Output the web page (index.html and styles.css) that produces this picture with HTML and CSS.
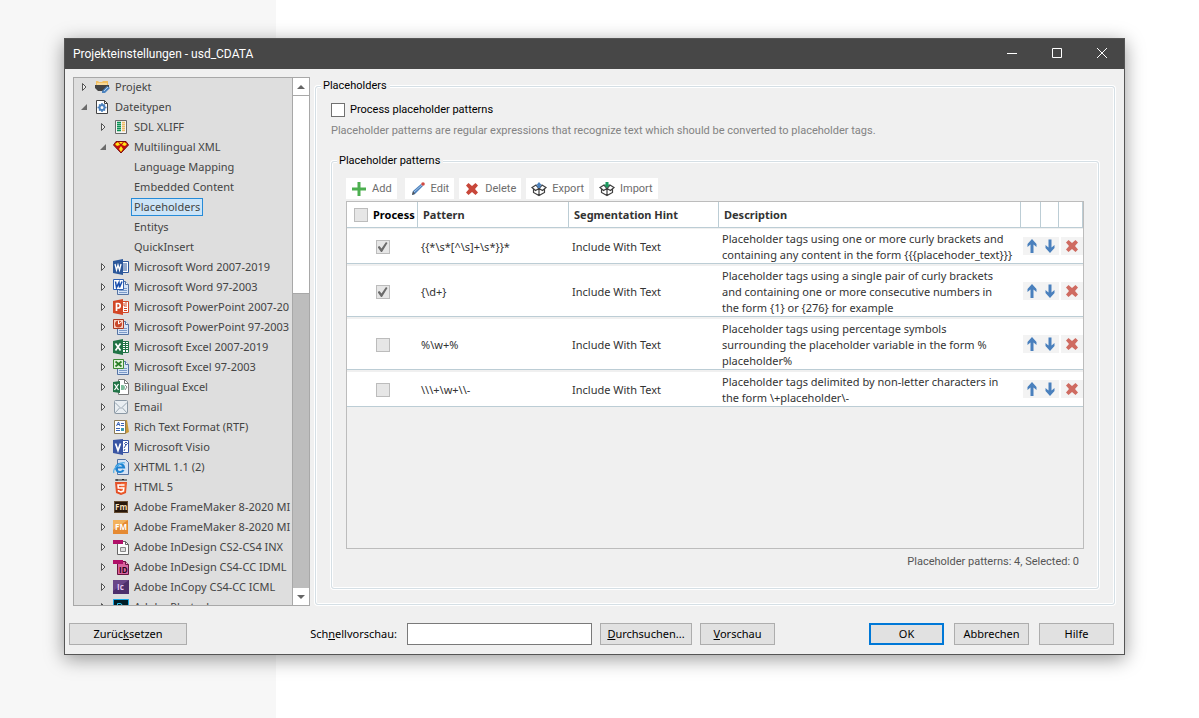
FILE: index.html
```html
<!DOCTYPE html>
<html lang="de">
  <head>
    <meta charset="UTF-8" />
    <meta name="viewport" content="width=device-width, initial-scale=1.0" />
    <title>Projekteinstellungen - usd_CDATA</title>
    <link rel="stylesheet" href="styles.css">
  </head>

  <body>
    <!-- shared icons -->
    <svg class="defs" aria-hidden="true">
      <symbol id="closed" viewBox="0 0 8 10"><path d="M2.500 1.500v7L6 5z" fill="#eee" stroke="#555"/></symbol>
      <symbol id="open" viewBox="0 0 8 10"><path d="M7 2v6H1z" fill="#6b6b6b"/></symbol>
      <symbol id="up" viewBox="0 0 16 16"><path d="M8 1l4.500 5v3L9.500 6.500V15h-3V6.500L3.500 9V6z" fill="#4a80bd"/></symbol>
      <symbol id="down" viewBox="0 0 16 16"><path d="M8 15l4.500-5V7L9.500 9.500V1.500h-3v8L3.500 7v3z" fill="#4a80bd"/></symbol>
      <symbol id="cross" viewBox="0 0 16 16"><path d="M4.500 2L8 5l3.500-3L14 4.500 11 8l3 3.500-2.500 2.500L8 11l-3.500 3L2 11.500 5 8 2 4.500z" fill="currentColor"/></symbol>
      <symbol id="box" viewBox="0 0 16 16">
        <path d="M2 6l6-2 6 2v6l-6 3-6-3z" fill="#fff"/>
        <path d="M2.500 8v3.500l5.500 3 5.500-3V8M8 8v6.500M1 6.500L5 4l3 3.500L4.500 9.500zM15 6.500L11 4 8 7.500l3.500 2z" fill="none" stroke="#3f3f3f" stroke-width="1.200"/>
      </symbol>
      <symbol id="page" viewBox="0 0 16 16">
        <path d="M4.500 2.500h8l3 3v10h-11z" fill="#d6e3f5" stroke="#5473a3"/>
        <path d="M12.500 2.500v3h3" fill="#fff" stroke="#5473a3"/>
        <path d="M6 11.500h8M6 13.500h8M11 9.500h3" stroke="#7b9bca"/>
      </symbol>
    </svg>

    <div class="window">
      <header class="titlebar">
        <h1>Projekteinstellungen - usd_CDATA</h1>
        <div class="window-buttons">
          <button aria-label="Minimieren"><svg width="10" height="10"><path d="M0 5.500h10" stroke="#fff"/></svg></button>
          <button aria-label="Maximieren"><svg width="10" height="10"><path d="M.5.5h9v9h-9z" fill="none" stroke="#fff"/></svg></button>
          <button aria-label="Schließen"><svg width="10" height="10"><path d="M0 0l10 10M10 0L0 10" stroke="#fff"/></svg></button>
        </div>
      </header>

      <main class="content">
        <nav class="tree">
          <ul class="tree-list">
            <li><svg class="arrow"><use href="#closed"/></svg>
              <svg class="icon" viewBox="0 0 16 16"><path d="M2 6V2h2l1 1h3l1-1h5v5z" fill="#f2c063"/><path d="M3 5h10" stroke="#fff3cf"/><path d="M1 6h14v3l-3 3H4L1 9z" fill="#444"/><path d="M8 12l5-5 3 2-5 5H8z" fill="#4d84bf"/><path d="M10 12l4-4" stroke="#b9d2ec"/></svg>
              <span>Projekt</span></li>
            <li><svg class="arrow"><use href="#open"/></svg>
              <svg class="icon" viewBox="0 0 16 16"><path d="M2.500 1.500h8l3 3v10h-11z" fill="#fff" stroke="#444"/><path d="M10.500 1.500v3h3" fill="none" stroke="#444"/><circle cx="8" cy="8.500" r="2.500" fill="none" stroke="#4a80bd" stroke-width="2"/><path d="M8 4v2M8 11v2M3.500 8.500h2M10.500 8.500h2M5 5.500l1 1M10 10.500l1 1M11 5.500l-1 1M6 10.500l-1 1" stroke="#4a80bd" stroke-width="1.500"/></svg>
              <span>Dateitypen</span></li>
            <li class="sub"><svg class="arrow"><use href="#closed"/></svg>
              <svg class="icon" viewBox="0 0 16 16"><path d="M2.500 1.500h11v13h-11z" fill="#f4f4f4" stroke="#6b6b6b"/><path d="M4 3.500h4M4 5.500h4M4 7.500h4M4 9.500h4M4 11.500h4" stroke="#0b9355" stroke-width="1.500"/><path d="M9 3.500h3M9 5.500h3M9 7.500h3M9 9.500h3M9 11.500h3" stroke="#eebc67" stroke-width="1.500"/></svg>
              <span>SDL XLIFF</span></li>
            <li class="sub"><svg class="arrow"><use href="#open"/></svg>
              <svg class="icon" viewBox="0 0 16 16"><path d="M3 2.500h10l2.500 3.500L8 14 .5 6z" fill="#c40c0c" stroke="#7b1010"/><path d="M2 5l3-2 2 3-3 1zM14 5l-3-2-2 3 3 1zM6 3h4L8 5zM8 7l2 3-2 3-2-3z" fill="#ffe715"/></svg>
              <span>Multilingual XML</span></li>
            <li class="leaf"><span>Language Mapping</span></li>
            <li class="leaf"><span>Embedded Content</span></li>
            <li class="leaf selected"><span>Placeholders</span></li>
            <li class="leaf"><span>Entitys</span></li>
            <li class="leaf"><span>QuickInsert</span></li>
            <li class="sub"><svg class="arrow"><use href="#closed"/></svg>
              <svg class="icon" viewBox="0 0 16 16"><path d="M8.500 2.500h7v11h-7z" fill="#fff" stroke="#2b579a"/><path d="M9 5h5M9 7h5M9 9h5M9 11h5" stroke="#2b579a"/><path d="M0 2l10-2v16L0 14z" fill="#2b579a"/><path d="M2 5l1.500 6L5 6l1.500 5L8 5" fill="none" stroke="#fff" stroke-width="1.300"/></svg>
              <span>Microsoft Word 2007-2019</span></li>
            <li class="sub"><svg class="arrow"><use href="#closed"/></svg>
              <svg class="icon" viewBox="0 0 16 16"><use href="#page"/><path d="M.5.5h10v10H.5z" fill="#fff" stroke="#2e5fb0"/><path d="M2.500 2.500l1 6 2.500-5 .5 5 2.500-6" fill="none" stroke="#174dad" stroke-width="1.500"/></svg>
              <span>Microsoft Word 97-2003</span></li>
            <li class="sub"><svg class="arrow"><use href="#closed"/></svg>
              <svg class="icon" viewBox="0 0 16 16"><path d="M8.500 2.500h7v11h-7z" fill="#fff" stroke="#d24726"/><path d="M11 4v3h3M11 9.500h3M11 11.500h3M13 3v3" fill="none" stroke="#d24726"/><path d="M0 2l10-2v16L0 14z" fill="#d24726"/><path d="M3.500 12V4.500H5a2 2 0 0 1 0 4.500H3.500" fill="none" stroke="#fff" stroke-width="1.700"/></svg>
              <span>Microsoft PowerPoint 2007-20</span></li>
            <li class="sub"><svg class="arrow"><use href="#closed"/></svg>
              <svg class="icon" viewBox="0 0 16 16"><use href="#page"/><path d="M.5.5h10v9H.5z" fill="#f9d3c3" stroke="#a83c25"/><circle cx="5.500" cy="5" r="3.500" fill="#c9492a"/><path d="M5.500 5V1.500M5.500 5l3-2" stroke="#fff"/></svg>
              <span>Microsoft PowerPoint 97-2003</span></li>
            <li class="sub"><svg class="arrow"><use href="#closed"/></svg>
              <svg class="icon" viewBox="0 0 16 16"><path d="M8.500 2.500h7v11h-7z" fill="#fff" stroke="#217346"/><path d="M10 4.500h5M10 6.500h5M10 8.500h5M10 10.500h5M12.500 3v10" stroke="#217346"/><path d="M0 2l10-2v16L0 14z" fill="#217346"/><path d="M2.500 4.500l5 7M7.500 4.500l-5 7" stroke="#fff" stroke-width="1.700"/></svg>
              <span>Microsoft Excel 2007-2019</span></li>
            <li class="sub"><svg class="arrow"><use href="#closed"/></svg>
              <svg class="icon" viewBox="0 0 16 16"><use href="#page"/><path d="M.5.5h10v9H.5z" fill="#e3f2dc" stroke="#3e8a35"/><path d="M2.500 2.500l6 5M8.500 2.500l-6 5" stroke="#2a7d25" stroke-width="1.700"/></svg>
              <span>Microsoft Excel 97-2003</span></li>
            <li class="sub"><svg class="arrow"><use href="#closed"/></svg>
              <svg class="icon" viewBox="0 0 16 16"><path d="M5.500.5h6l4 4v11h-10z" fill="#fff" stroke="#7a7a7a"/><path d="M11.500.5v4h4" fill="none" stroke="#7a7a7a"/><path d="M8 6h2a2 2.500 0 0 1 0 5H8z" fill="#7fbd9c"/><path d="M12 6l2 2-2 3" fill="none" stroke="#888"/><path d="M0 3l7-1v12l-7-1z" fill="#217346"/><path d="M1.500 5l4 6M5.500 5l-4 6" stroke="#fff" stroke-width="1.300"/></svg>
              <span>Bilingual Excel</span></li>
            <li class="sub"><svg class="arrow"><use href="#closed"/></svg>
              <svg class="icon" viewBox="0 0 16 16"><rect x="1.500" y="1.500" width="13" height="13" rx="1" fill="#e9eef2" stroke="#8b98a4"/><path d="M2 3.500l6 6 6-6M2 14l4.500-5M14 14L9.500 9" fill="none" stroke="#9aa7b2"/></svg>
              <span>Email</span></li>
            <li class="sub"><svg class="arrow"><use href="#closed"/></svg>
              <svg class="icon" viewBox="0 0 16 16"><path d="M12 1h2l2 12-4 2z" fill="#c99a37"/><path d="M1.500 1.500h11v13h-11z" fill="#fff" stroke="#8a7a55"/><path d="M3.500 7l2-4 1.500 4M4 5.500h2.500M8 4.500h3M8 6.500h3M3 9.500h4M3 11.500h4" fill="none" stroke="#3b64b6"/><path d="M8 9h3v3H8z" fill="#3c9cb1"/></svg>
              <span>Rich Text Format (RTF)</span></li>
            <li class="sub"><svg class="arrow"><use href="#closed"/></svg>
              <svg class="icon" viewBox="0 0 16 16"><path d="M8.500 1.500h7v12h-7z" fill="#fff" stroke="#3955a3"/><path d="M11 9l2-3M12 10l-1 2M13 3l1.500 1.500L13 6l-1.500-1.500z" fill="none" stroke="#3955a3"/><path d="M0 1l10-1v16L0 14z" fill="#3955a3"/><path d="M2.500 4.500l2.500 7 2.500-7" fill="none" stroke="#fff" stroke-width="1.700"/></svg>
              <span>Microsoft Visio</span></li>
            <li class="sub"><svg class="arrow"><use href="#closed"/></svg>
              <svg class="icon" viewBox="0 0 16 16"><path d="M4.500.5h8l3 3v12h-11z" fill="#d6e3f5" stroke="#5473a3"/><path d="M10.500 11A4 4 0 1 1 11 8.500H4" fill="none" stroke="#1e83d2" stroke-width="2.200"/><path d="M1 14C-1 10 8 2 12 4" fill="none" stroke="#56afe8" stroke-width="1.200"/></svg>
              <span>XHTML 1.1 (2)</span></li>
            <li class="sub"><svg class="arrow"><use href="#closed"/></svg>
              <svg class="icon" viewBox="0 0 16 16"><path d="M3 0v2M5 0v2M3 1h2M7 0v2M9 2V0l1 1 1-1v2M13 0v2" stroke="#222" fill="none"/><path d="M2 3h12l-1 11-5 2-5-2z" fill="#e44f26"/><path d="M8 4h5l-1 9-4 2z" fill="#f16a35"/><path d="M11.500 6H5l.3 3h5.500l-.4 3L8 13l-2.500-1V11" fill="none" stroke="#fff" stroke-width="1.500"/></svg>
              <span>HTML 5</span></li>
            <li class="sub"><svg class="arrow"><use href="#closed"/></svg>
              <svg class="icon" viewBox="0 0 16 16"><rect x="1.500" y="2.500" width="13" height="11" fill="#28180b" stroke="#644c31"/><text x="2" y="11" class="tile-text" fill="#f4dfb8">Fm</text></svg>
              <span>Adobe FrameMaker 8-2020 MI</span></li>
            <li class="sub"><svg class="arrow"><use href="#closed"/></svg>
              <svg class="icon" viewBox="0 0 16 16"><path d="M0 1h15v14H0z" fill="#e58a32"/><path d="M0 1h15L0 11z" fill="#f3b25d"/><text x="2" y="11" class="tile-text" fill="#fff">FM</text></svg>
              <span>Adobe FrameMaker 8-2020 MI</span></li>
            <li class="sub"><svg class="arrow"><use href="#closed"/></svg>
              <svg class="icon" viewBox="0 0 16 16"><path d="M4.500 2.500h8l3 3v10h-11z" fill="#fafafa" stroke="#666"/><path d="M12.500 2.500v3h3" fill="none" stroke="#666"/><path d="M7.500 8.500h5v4h-5z" fill="#ddd" stroke="#888"/><path d="M0 1h10v4H0z" fill="#b00f68"/></svg>
              <span>Adobe InDesign CS2-CS4 INX</span></li>
            <li class="sub"><svg class="arrow"><use href="#closed"/></svg>
              <svg class="icon" viewBox="0 0 16 16"><path d="M4.500 2.500h8l3 3v10h-11z" fill="#d9649f" stroke="#671340"/><path d="M12.500 2.500v3h3" fill="#f3b1d1" stroke="#671340"/><path d="M0 1h10v4H0z" fill="#b00f68"/><text x="6" y="14" class="tile-text" fill="#2a0519">ID</text></svg>
              <span>Adobe InDesign CS4-CC IDML</span></li>
            <li class="sub"><svg class="arrow"><use href="#closed"/></svg>
              <svg class="icon" viewBox="0 0 16 16"><path d="M0 1h16v14H0z" fill="#4d2f6b"/><path d="M0 1h16L0 12z" fill="#694688"/><text x="4" y="11" class="tile-text" fill="#e3c8f5">Ic</text></svg>
              <span>Adobe InCopy CS4-CC ICML</span></li>
            <li class="sub"><svg class="arrow"><use href="#closed"/></svg>
              <svg class="icon" viewBox="0 0 16 16"><path d="M.5.5h15v14H.5z" fill="#001d26" stroke="#18a8e5"/><path d="M4.500 12V4.500H7a2 2 0 0 1 0 4H4.500" fill="none" stroke="#27c3f3"/></svg>
              <span>Adobe Photoshop</span></li>
          </ul>
          <div class="scrollbar">
            <button aria-label="Nach oben"><svg width="8" height="4"><path d="M4 0l4 4H0z" fill="#666"/></svg></button>
            <div class="thumb"></div>
            <button aria-label="Nach unten"><svg width="8" height="4"><path d="M0 0h8L4 4z" fill="#666"/></svg></button>
          </div>
        </nav>

        <fieldset class="group">
          <legend>Placeholders</legend>
          <label class="process"><input type="checkbox" />Process placeholder patterns</label>
          <p class="hint">Placeholder patterns are regular expressions that recognize text which should be converted to placeholder tags.</p>

          <fieldset class="group patterns">
            <legend>Placeholder patterns</legend>
            <div class="toolbar">
              <button class="add"><svg class="icon" viewBox="0 0 16 16"><path d="M8 1v14M1 8h14" stroke="#4caf50" stroke-width="3"/></svg>Add</button>
              <button class="edit"><svg class="icon" viewBox="0 0 16 16"><path d="M3 10l8-7 2 2-8 8-3 1z" fill="#4a80bd"/><path d="M4 11l8-7" stroke="#a8c6e6"/><path d="M2 14l1-4 2 3z" fill="#555"/><circle cx="13" cy="3" r="1.800" fill="#d04a43"/></svg>Edit</button>
              <button class="delete"><svg class="icon"><use href="#cross"/></svg>Delete</button>
              <button><svg class="icon" viewBox="0 0 16 16"><use href="#box"/><path d="M8 1l3 3.500H9.500V7h-3V4.500H5z" fill="#4a80bd"/></svg>Export</button>
              <button><svg class="icon" viewBox="0 0 16 16"><use href="#box"/><path d="M8 7l3-3.500H9.500V1h-3v2.500H5z" fill="#1b9a60"/></svg>Import</button>
            </div>

            <div class="grid">
              <table>
                <colgroup>
                  <col class="col-process" /><col class="col-pattern" /><col class="col-hint" /><col />
                  <col class="col-up" /><col class="col-down" /><col class="col-remove" />
                </colgroup>
                <thead>
                  <tr>
                    <th class="check-head"><label><input type="checkbox" disabled />Process</label></th>
                    <th>Pattern</th>
                    <th>Segmentation Hint</th>
                    <th>Description</th>
                    <th></th>
                    <th></th>
                    <th></th>
                  </tr>
                </thead>
                <tbody>
                  <tr>
                    <td class="check"><input type="checkbox" aria-label="Process" checked disabled /></td>
                    <td>{{*\s*[^\s]+\s*}}*</td>
                    <td>Include With Text</td>
                    <td>Placeholder tags using one or more curly brackets and containing any content in the form {{{placehoder_text}}}</td>
                    <td class="action"><button aria-label="Up"><svg class="icon"><use href="#up"/></svg></button></td>
                    <td class="action"><button aria-label="Down"><svg class="icon"><use href="#down"/></svg></button></td>
                    <td class="action remove"><button aria-label="Delete"><svg class="icon"><use href="#cross"/></svg></button></td>
                  </tr>
                  <tr>
                    <td class="check"><input type="checkbox" aria-label="Process" checked disabled /></td>
                    <td>{\d+}</td>
                    <td>Include With Text</td>
                    <td>Placeholder tags using a single pair of curly brackets<br />and containing one or more consecutive numbers in<br />the form {1} or {276} for example</td>
                    <td class="action"><button aria-label="Up"><svg class="icon"><use href="#up"/></svg></button></td>
                    <td class="action"><button aria-label="Down"><svg class="icon"><use href="#down"/></svg></button></td>
                    <td class="action remove"><button aria-label="Delete"><svg class="icon"><use href="#cross"/></svg></button></td>
                  </tr>
                  <tr>
                    <td class="check"><input type="checkbox" aria-label="Process" disabled /></td>
                    <td>%\w+%</td>
                    <td>Include With Text</td>
                    <td>Placeholder tags using percentage symbols<br />surrounding the placeholder variable in the form %<br />placeholder%</td>
                    <td class="action"><button aria-label="Up"><svg class="icon"><use href="#up"/></svg></button></td>
                    <td class="action"><button aria-label="Down"><svg class="icon"><use href="#down"/></svg></button></td>
                    <td class="action remove"><button aria-label="Delete"><svg class="icon"><use href="#cross"/></svg></button></td>
                  </tr>
                  <tr>
                    <td class="check"><input type="checkbox" aria-label="Process" disabled /></td>
                    <td>\\\+\w+\\-</td>
                    <td>Include With Text</td>
                    <td>Placeholder tags delimited by non-letter characters in the form \+placeholder\-</td>
                    <td class="action"><button aria-label="Up"><svg class="icon"><use href="#up"/></svg></button></td>
                    <td class="action"><button aria-label="Down"><svg class="icon"><use href="#down"/></svg></button></td>
                    <td class="action remove"><button aria-label="Delete"><svg class="icon"><use href="#cross"/></svg></button></td>
                  </tr>
                </tbody>
              </table>
            </div>
            <p class="status">Placeholder patterns: 4, Selected: 0</p>
          </fieldset>
        </fieldset>
      </main>

      <footer class="footer">
        <button class="btn reset">Zurüc<u>k</u>setzen</button>
        <div class="preview">
          <label for="preview">Sch<u>n</u>ellvorschau:</label>
          <input type="text" id="preview" />
          <button class="btn browse"><u>D</u>urchsuchen...</button>
          <button class="btn"><u>V</u>orschau</button>
        </div>
        <div class="actions">
          <button class="btn primary">OK</button>
          <button class="btn">Abbrechen</button>
          <button class="btn">Hilfe</button>
        </div>
      </footer>
    </div>
  </body>
</html>
```
FILE: styles.css
```css
* {
  box-sizing: border-box;
}

body {
  margin: 0;
  padding: 38px 74px 63px 64px;
  height: 100vh;
  background: linear-gradient(to right, #f7f7f7 276px, #fff 276px);
  font-family: "Noto Sans", "Open Sans", sans-serif;
  font-size: 11px;
  line-height: 16px;
  color: #000;
}

button,
input {
  font: inherit;
  margin: 0;
}

button {
  border: none;
  padding: 0;
  background: none;
}

p {
  margin: 0;
}

.defs {
  display: none;
}

.icon {
  width: 16px;
  height: 16px;
  flex: none;
}

.tile-text {
  font-family: "Open Sans", sans-serif;
  font-size: 8px;
  font-weight: 700;
}

/* window */
.window {
  display: flex;
  flex-direction: column;
  height: 100%;
  background: #f0f0f0;
  border: 1px solid #555;
  box-shadow: 0 4px 18px rgba(0, 0, 0, 0.4);
}

.titlebar {
  display: flex;
  justify-content: space-between;
  align-items: center;
  height: 30px;
  flex: none;
  padding-left: 8px;
  background: #474747;
}

.titlebar h1 {
  margin: 0;
  font-family: Roboto, sans-serif;
  font-size: 12px;
  font-weight: 400;
  color: #fff;
}

.window-buttons {
  display: flex;
}

.window-buttons button {
  width: 45px;
  height: 30px;
}

.content {
  display: flex;
  flex: 1;
  min-height: 0;
  gap: 5px;
  padding: 8px 9px 0 8px;
}

/* tree */
.tree {
  display: flex;
  width: 237px;
  flex: none;
  border: 1px solid #a8a8a8;
  background: #dedede;
}

.tree-list {
  flex: 1;
  min-width: 0;
  margin: 0;
  padding: 0 0 0 6px;
  overflow: hidden;
  list-style: none;
  color: #444;
}

.tree-list li {
  display: flex;
  align-items: center;
  height: 20px;
  padding-bottom: 2px;
  white-space: nowrap;
}

.tree-list .sub {
  padding-left: 19px;
}

.tree-list .leaf {
  padding-left: 51px;
}

.tree-list span {
  padding: 0 2px;
  border: 1px solid transparent;
}

.tree-list .icon {
  margin: 0 2px 0 6px;
}

.arrow {
  width: 8px;
  height: 10px;
  flex: none;
}

.selected span {
  background: #cce4f7;
  border-color: #268bd8;
}

.scrollbar {
  display: flex;
  flex-direction: column;
  justify-content: space-between;
  width: 17px;
  background: #bdbdbd;
  border-left: 1px solid #a8a8a8;
}

.scrollbar button {
  display: flex;
  align-items: center;
  justify-content: center;
  height: 17px;
  background: #fff;
}

.scrollbar .thumb {
  height: 199px;
  margin-bottom: auto;
  background: #fff;
  border: solid #a8a8a8;
  border-width: 1px 0;
}

/* group boxes */
.group {
  display: flex;
  flex-direction: column;
  flex: 1;
  min-width: 0;
  margin: 1px 0;
  padding: 8px 15px 15px;
  border: 1px solid #d5dfe5;
  border-radius: 3px;
  box-shadow: 0 0 0 1px #fff, inset 0 0 0 1px #fff;
  font-family: Roboto, sans-serif;
}

.group legend {
  margin-left: -10px;
  padding: 0 3px 0 2px;
  background: #f0f0f0;
}

.process {
  display: flex;
  align-items: center;
  gap: 5px;
}

input[type="checkbox"] {
  appearance: none;
  display: grid;
  place-content: center;
  width: 14px;
  height: 14px;
  flex: none;
  background: #fff;
  border: 1px solid #707070;
}

input[type="checkbox"]:disabled {
  background: #e6e6e6;
  border-color: #bcbcbc;
}

input[type="checkbox"]:checked::before {
  content: "";
  width: 10px;
  height: 10px;
  background: #6b6b6b;
  clip-path: polygon(0 50%, 20% 40%, 40% 65%, 85% 0, 100% 10%, 45% 100%, 35% 100%);
}

.hint {
  margin: 5px 0 14px;
  color: #838383;
}

.patterns {
  margin: 0;
  padding: 9px 14px 15px;
}

.patterns > legend {
  margin-left: -9px;
}

.toolbar {
  display: flex;
  gap: 5px;
  margin-bottom: 2px;
}

.toolbar button {
  display: flex;
  align-items: center;
  gap: 5px;
  height: 21px;
  padding: 0 5px;
  background: #fff;
  color: #6d6d6d;
}

.toolbar .add {
  margin-right: 3px;
}

.toolbar .delete .icon {
  color: #c8473a;
}

/* pattern table */
.grid {
  flex: 1;
  border: 1px solid #bcbcbc;
  font-family: "Noto Sans", "Open Sans", sans-serif;
}

table {
  width: 100%;
  table-layout: fixed;
  border-spacing: 0;
  color: #333;
}

.col-process { width: 71px; }
.col-pattern { width: 151px; }
.col-hint { width: 150px; }
.col-up { width: 20px; }
.col-down { width: 18px; }
.col-remove { width: 24px; }

th {
  height: 26px;
  padding: 0 5px;
  background: #fff;
  border: solid #bccdd5;
  border-width: 0 1px 1px 0;
  text-align: left;
  font-weight: 700;
}

.check-head {
  color: #000;
}

.check-head label {
  display: flex;
  align-items: center;
  gap: 5px;
  margin-left: 2px;
}

td {
  padding: 2px 3px 0;
  background: #fff;
  border-top: 2px solid #f0f0f0;
  border-bottom: 1px solid #bccdd5;
}

tbody tr:first-child td {
  border-top-width: 1px;
}

.check input {
  margin: 0 auto;
}

td.action {
  padding: 0;
}

.action button {
  display: flex;
  align-items: center;
  justify-content: center;
  width: 18px;
  height: 18px;
  margin-left: auto;
  background: #f3f3f3;
}

.action.remove button {
  width: 22px;
  color: #cf6b61;
}

.status {
  margin: 5px 5px 3px;
  text-align: right;
  color: #555;
}

/* footer */
.footer {
  display: flex;
  align-items: center;
  flex: none;
  padding: 17px 10px 9px 4px;
}

.btn {
  min-width: 75px;
  height: 22px;
  background: #e1e1e1;
  border: 1px solid #adadad;
}

.reset {
  width: 118px;
}

.preview {
  display: flex;
  align-items: center;
  gap: 8px;
  margin: 0 94px 0 auto;
}

.preview input {
  width: 185px;
  height: 22px;
  margin-left: 2px;
  background: #fff;
  border: 1px solid #7a7a7a;
}

.browse {
  width: 92px;
}

.actions {
  display: flex;
  gap: 10px;
}

.primary {
  border: 2px solid #0078d7;
}
```
